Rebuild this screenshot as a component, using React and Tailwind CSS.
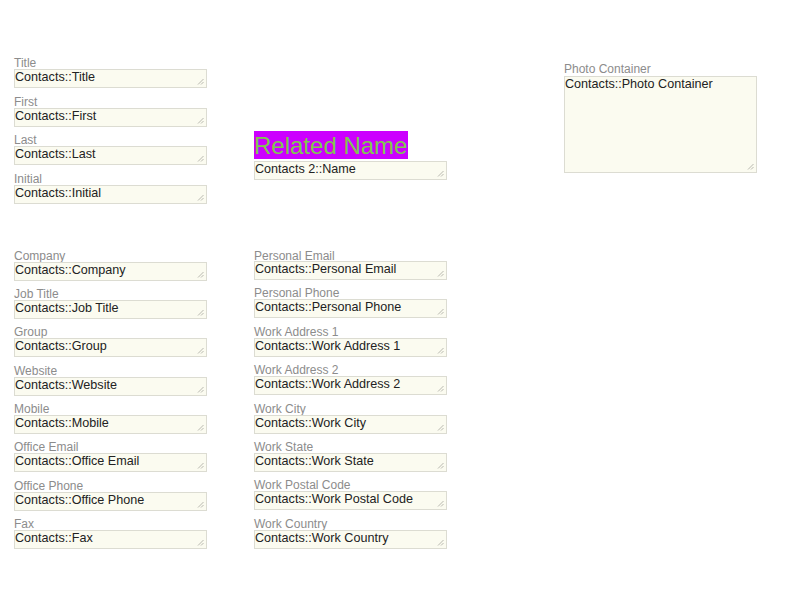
import React from "react";

const font = { fontFamily: '"Liberation Sans", Arial, Helvetica, sans-serif' };

function Grip() {
  return (
    <svg className="absolute right-[2px] bottom-[2px]" width="7" height="7" viewBox="0 0 7 7">
      <path d="M6.5 1 L1 6.5 M6.5 4 L4 6.5" stroke="#a8a8a0" strokeWidth="0.8" fill="none" />
    </svg>
  );
}

function FieldBox({ value, tall }) {
  return (
    <div
      className={`relative w-[193px] ${tall ? "h-[97px]" : "h-[19px]"} bg-[#fbfbf0] border border-[#dcdcd2] text-[12.6px] leading-[15px] text-[#222222] overflow-hidden whitespace-nowrap`}
    >
      {value}
      <Grip />
    </div>
  );
}

function Field({ label, value, nudge }) {
  return (
    <div className="flex flex-col">
      <div className={`text-[12px] leading-[12px] h-[12px] text-[#8c8c8c] whitespace-nowrap ${nudge ? "relative top-[1px]" : ""}`}>
        {label}
      </div>
      <FieldBox value={value} />
    </div>
  );
}

const topLeft = ["Title", "First", "Last", "Initial"];
const bottomLeft = ["Company", "Job Title", "Group", "Website", "Mobile", "Office Email", "Office Phone", "Fax"];
const bottomMid = [
  "Personal Email",
  "Personal Phone",
  "Work Address 1",
  "Work Address 2",
  "Work City",
  "Work State",
  "Work Postal Code",
  "Work Country",
];

export default function App() {
  return (
    <div className="w-[792px] h-[600px] bg-white pt-[57px] pl-[14px] flex items-start overflow-hidden" style={font}>
      {/* Left column */}
      <div className="w-[193px] flex flex-col">
        <div className="flex flex-col gap-[7.5px]">
          {topLeft.map((f) => (
            <Field key={f} label={f} value={`Contacts::${f}`} />
          ))}
        </div>
        <div className="flex flex-col gap-[7.4px] mt-[46px]">
          {bottomLeft.map((f) => (
            <Field key={f} label={f} value={`Contacts::${f}`} />
          ))}
        </div>
      </div>

      {/* Middle column */}
      <div className="w-[193px] ml-[47px] flex flex-col mt-[74px]">
        <div className="self-start bg-[#cc00ff] text-[#80c850] text-[24px] leading-[28px] h-[28px] pt-[1px] pr-[1px] whitespace-nowrap">
          Related Name
        </div>
        <div className="mt-[2px]">
          <FieldBox value="Contacts 2::Name" />
        </div>
        <div className="flex flex-col gap-[7.4px] mt-[69px]">
          {bottomMid.map((f, i) => (
            <Field key={f} label={f} value={`Contacts::${f}`} nudge={i === 0} />
          ))}
        </div>
      </div>

      {/* Right column */}
      <div className="w-[193px] ml-[117px] mt-[6px] flex flex-col">
        <div className="text-[12px] leading-[13px] h-[13px] text-[#8c8c8c] whitespace-nowrap">Photo Container</div>
        <FieldBox value="Contacts::Photo Container" tall />
      </div>
    </div>
  );
}
